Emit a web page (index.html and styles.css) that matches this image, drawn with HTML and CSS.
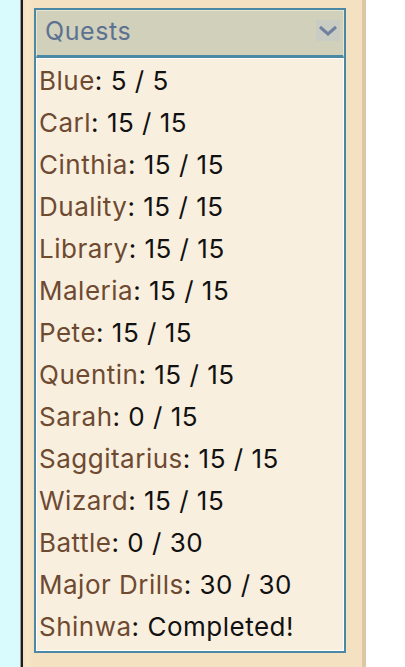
FILE: index.html
```html
<!DOCTYPE html>
<html>
<head>
<meta charset="utf-8">
<link rel="stylesheet" href="styles.css">
</head>
<body>
<div class="page">
  <div class="strip"></div>
  <div class="panel">
    <div class="box">
      <div class="head">
        <span class="title">Quests</span>
        <span class="toggle"><svg width="24" height="21" viewBox="0 0 24 21"><polyline points="4,7 12,14 20,7" fill="none" stroke="#6f819c" stroke-width="3" stroke-linejoin="miter"/></svg></span>
      </div>
      <div class="list">
        <div class="row"><span class="name">Blue</span>: 5 / 5</div>
        <div class="row"><span class="name">Carl</span>: 15 / 15</div>
        <div class="row"><span class="name">Cinthia</span>: 15 / 15</div>
        <div class="row"><span class="name">Duality</span>: 15 / 15</div>
        <div class="row"><span class="name">Library</span>: 15 / 15</div>
        <div class="row"><span class="name">Maleria</span>: 15 / 15</div>
        <div class="row"><span class="name">Pete</span>: 15 / 15</div>
        <div class="row"><span class="name">Quentin</span>: 15 / 15</div>
        <div class="row"><span class="name">Sarah</span>: 0 / 15</div>
        <div class="row"><span class="name">Saggitarius</span>: 15 / 15</div>
        <div class="row"><span class="name">Wizard</span>: 15 / 15</div>
        <div class="row"><span class="name">Battle</span>: 0 / 30</div>
        <div class="row"><span class="name">Major Drills</span>: 30 / 30</div>
        <div class="row"><span class="name">Shinwa</span>: Completed!</div>
      </div>
    </div>
  </div>
</div>
</body>
</html>
```
FILE: styles.css
```css
html, body {
  margin: 0;
  padding: 0;
  background: #ffffff;
}
.page {
  display: flex;
  height: 667px;
  overflow: hidden;
  font-family: Inter, "Liberation Sans", sans-serif;
}
.strip {
  width: 20px;
  background: #d9fbfd;
  border-right: 1px solid #9aa0a0;
}
.panel {
  width: 345px;
  border-left: 2px solid #1c1c1c;
  border-right: 4px solid #dcc6a3;
  background: linear-gradient(to right, #f2dfbf 0, #f7e6c8 4px, #f4e1c1 10px, #f4e1c1 100%);
  padding: 8px 22px 0 11px;
  box-sizing: border-box;
}
.box {
  border: 2px solid #4b88a6;
  width: 312px;
  box-sizing: border-box;
}
.head {
  display: flex;
  align-items: center;
  justify-content: space-between;
  box-sizing: border-box;
  background: #d0d0bb;
  border: 1px solid #e7e4cf;
  padding: 0 3px 3px 8px;
  border-bottom: 3px solid #4b88a6;
  height: 48px;
}
.title {
  color: #5d7291;
  font-size: 25px;
  letter-spacing: 0.6px;
  line-height: 1;
}
.toggle {
  display: flex;
  width: 24px;
  height: 21px;
  background: #c8ccc3;
  margin-top: -2px;
}
.list {
  background: #f9efdf;
  border: 1px solid #ffffff;
  padding: 1px 0 2px 2px;
}
.row {
  font-size: 26px;
  line-height: 42px;
  letter-spacing: 0.5px;
  color: #111111;
  white-space: nowrap;
}
.name {
  color: #6e4a31;
}
```
